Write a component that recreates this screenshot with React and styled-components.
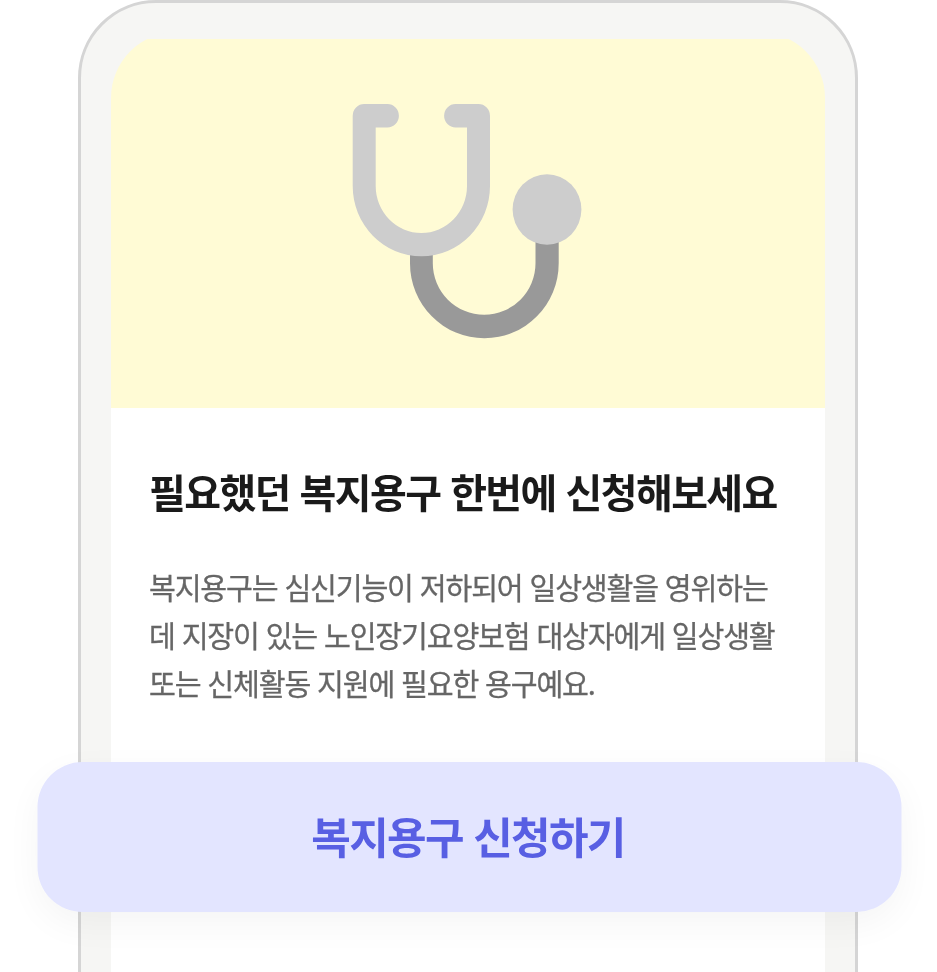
import React from "react";
import styled, { createGlobalStyle } from "styled-components";

const GlobalStyle = createGlobalStyle`
  *, *::before, *::after { box-sizing: border-box; }
  body { margin: 0; background: #fff; }
`;

const Stage = styled.main`
  position: relative;
  width: 937px;
  height: 972px;
  overflow: hidden;
  background: #fff;
  font-family: "Noto Sans CJK KR", sans-serif;
  -webkit-font-smoothing: antialiased;
`;

const Phone = styled.section`
  width: 780px;
  height: 1100px;
  margin-left: 78px;
  padding: 29px 30px 0;
  border: 3px solid #d5d5d5;
  border-radius: 78px;
  background: #f6f6f4;
`;

const Screen = styled.div`
  height: 100%;
  padding-top: 7px;
  border-radius: 66px 66px 0 0;
  overflow: hidden;
  background: #f6f6f4;
`;

const Hero = styled.div`
  display: flex;
  height: 369px;
  padding: 64px 0 0 241px;
  background: #fffbd5;
`;

const Content = styled.div`
  height: 100%;
  padding: 53px 38px 0;
  background: #fff;
`;

const Title = styled.h1`
  margin: 0 0 0 -0.5px;
  color: #1a1a1a;
  font-size: 40px;
  font-weight: 700;
  line-height: 60px;
  letter-spacing: -1.6px;
  word-spacing: 2.3px;
  white-space: nowrap;
  will-change: transform;
`;

const Description = styled.p`
  margin: 41px 0 0;
  color: #666;
  font-size: 29.2px;
  font-weight: 400;
  line-height: 48px;
  letter-spacing: -1.17px;
  word-spacing: 1.6px;
  white-space: nowrap;
  -webkit-text-stroke: 0.3px #666;
  will-change: transform;
`;

const ApplyButton = styled.button`
  position: absolute;
  top: 762px;
  left: 38px;
  width: 864px;
  height: 150px;
  padding: 0 3px 5px 0;
  border: 0;
  border-radius: 45px;
  background: #e3e5ff;
  box-shadow: 0 12px 36px rgba(0, 0, 0, 0.045);
  color: #585fe3;
  font-family: inherit;
  font-size: 43px;
  font-weight: 700;
  letter-spacing: -1.7px;
  word-spacing: 2.4px;
  transform: translateX(-0.5px);
  will-change: transform;
`;

function Stethoscope() {
  return (
    <svg width="230" height="236" viewBox="352 103 230 236" aria-hidden="true">
      <path
        d="M410 250V263.3A74.35 75 0 0 0 558.7 263.3V236H535.5V263.3A51.35 51.4 0 0 1 432.8 263.3V250Z"
        fill="#999"
      />
      <path
        d="M364.2 104H387.4A11.5 11.7 0 0 1 387.4 127.4H375.7V186A45.65 47 0 0 0 467 186V127.4H455.6A11.5 11.7 0 0 1 455.6 104H478.5A11.5 11.7 0 0 1 490 115.7V186A68.65 70.3 0 0 1 352.7 186V115.7A11.5 11.7 0 0 1 364.2 104Z"
        fill="#cdcdcd"
      />
      <ellipse cx="547" cy="209.5" rx="34.4" ry="35.2" fill="#cdcdcd" />
    </svg>
  );
}

export default function App() {
  return (
    <>
      <GlobalStyle />
      <Stage>
        <Phone>
          <Screen>
            <Hero>
              <Stethoscope />
            </Hero>
            <Content>
              <Title>필요했던 복지용구 한번에 신청해보세요</Title>
              <Description>
                복지용구는 심신기능이 저하되어 일상생활을 영위하는
                <br />데 지장이 있는 노인장기요양보험 대상자에게 일상생활
                <br />
                또는 신체활동 지원에 필요한 용구예요.
              </Description>
            </Content>
          </Screen>
        </Phone>
        <ApplyButton type="button">복지용구 신청하기</ApplyButton>
      </Stage>
    </>
  );
}
